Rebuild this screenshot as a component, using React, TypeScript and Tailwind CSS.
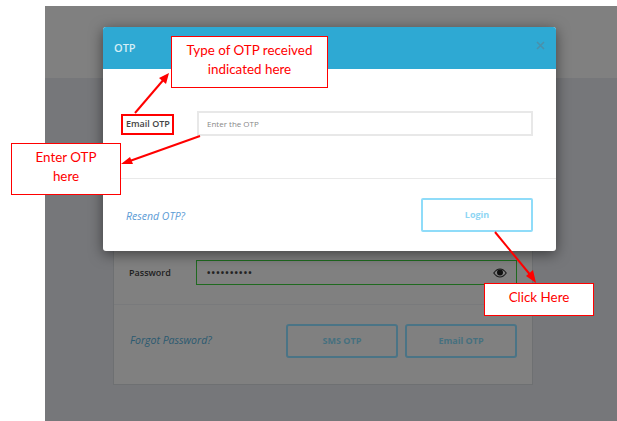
import React from "react";

const Callout = ({ className, children }: { className: string; children: React.ReactNode }) => (
  <div
    className={`absolute flex items-center justify-center border border-[#ff0000] bg-white pb-[5px] text-center font-['Lato',sans-serif] text-[13.4px] leading-[19px] text-[#ff0000] ${className}`}
  >
    {children}
  </div>
);

const Arrows = () => (
  <svg className="absolute left-0 top-0" width="617" height="421" viewBox="0 0 617 421" fill="none">
    <g stroke="#ff0000" strokeWidth="2">
      <line x1="135" y1="113" x2="165" y2="78" />
      <line x1="200" y1="136" x2="127" y2="162" />
      <line x1="495" y1="232" x2="532" y2="277" />
    </g>
    <g fill="#ff0000">
      <polygon points="169,73 166,84 159,78" />
      <polygon points="121,164 130,157 133,164" />
      <polygon points="536,283 526,276 533,270" />
    </g>
  </svg>
);

const Modal = () => (
  <div className="absolute left-[103px] top-[27px] flex h-[224px] w-[453px] flex-col overflow-hidden rounded-[3px] bg-white shadow-[0_3px_14px_rgba(0,0,0,0.5)]">
    <div className="flex h-[42px] items-center justify-between bg-[#2ea9d3] pl-[11px] pr-[11px]">
      <span className="text-[11px] font-semibold text-[#d5eef6]">OTP</span>
      <svg className="mb-[6px]" width="9" height="9" viewBox="0 0 9 9" stroke="#4a90ab" strokeWidth="1.6">
        <path d="M1 1l7 7M8 1l-7 7" />
      </svg>
    </div>
    <div className="flex h-[110px] items-start border-b border-[#e9e9e9] px-[23px] pt-[42px]">
      <label className="w-[71px] pt-[6px] text-[9px] font-semibold text-[#444]">Email OTP</label>
      <input
        placeholder="Enter the OTP"
        className="h-[25px] flex-1 border-2 border-[#e8e8e8] bg-white px-[8px] text-[8px] text-[#888] outline-none placeholder:text-[#888]"
      />
    </div>
    <div className="flex items-center justify-between px-[23px] pt-[19px]">
      <a className="mt-[4px] text-[10.500px] italic text-[#5b9bd5]">Resend OTP?</a>
      <button className="h-[34px] w-[112px] rounded-[2px] border-2 border-[#8fdcf9] bg-white text-[9px] font-bold text-[#8fd6f4]">
        Login
      </button>
    </div>
  </div>
);

export default function App() {
  return (
    <div className="relative h-[421px] w-[617px] overflow-hidden bg-white font-['Open_Sans',sans-serif]">
      <div className="ml-[45px] flex h-[421px] flex-col pt-[6px]">
        <div className="h-[72px] bg-[#808080]" />
        <div className="flex-1 bg-[#76777a] pl-[68px] pt-[150px]">
          <div className="h-[157px] w-[420px] border border-[#6e7072] bg-[#808080]">
            <div className="flex h-[76px] items-start border-b border-[#797a7c] px-[15px] pt-[31px]">
              <span className="w-[67px] pt-[6px] text-[9px] font-semibold text-[#1e1e1e]">Password</span>
              <div className="flex h-[25px] flex-1 items-center justify-between border border-[#1f6a1f] pl-[10px] pr-[9px]">
                <span className="text-[9px] font-bold leading-none tracking-[1.200px] text-[#222]">••••••••••</span>
                <svg width="14" height="10" viewBox="0 0 14 10" fill="none">
                  <path d="M0.800 5C3 1.800 5 1 7 1s4 .8 6.200 4C11 8.200 9 9 7 9S3 8.200 .8 5z" stroke="#1a1a1a" strokeWidth="1.200" />
                  <circle cx="7" cy="4.600" r="3" fill="#111" />
                </svg>
              </div>
            </div>
            <div className="flex items-center pl-[16px] pr-[15px] pt-[19px]">
              <a className="w-[157px] text-[10.500px] italic text-[#2b5a70]">Forgot Password?</a>
              <div className="flex gap-[7px]">
                <button className="h-[34px] w-[112px] rounded-[3px] border-2 border-[#4a7486] text-[9px] font-bold text-[#46707f]">
                  SMS OTP
                </button>
                <button className="h-[34px] w-[112px] rounded-[3px] border-2 border-[#4a7486] text-[9px] font-bold text-[#46707f]">
                  Email OTP
                </button>
              </div>
            </div>
          </div>
        </div>
      </div>

      <Modal />

      <div className="absolute left-[121px] top-[114px] h-[21px] w-[53px] border-2 border-[#ff0000]" />
      <Arrows />

      <Callout className="left-[171px] top-[36px] h-[52px] w-[157px]">
        Type of OTP received
        <br />
        indicated here
      </Callout>
      <Callout className="left-[11px] top-[143px] h-[52px] w-[110px]">
        Enter OTP
        <br />
        here
      </Callout>
      <Callout className="left-[484px] top-[283px] h-[33px] w-[110px]">Click Here</Callout>
    </div>
  );
}
